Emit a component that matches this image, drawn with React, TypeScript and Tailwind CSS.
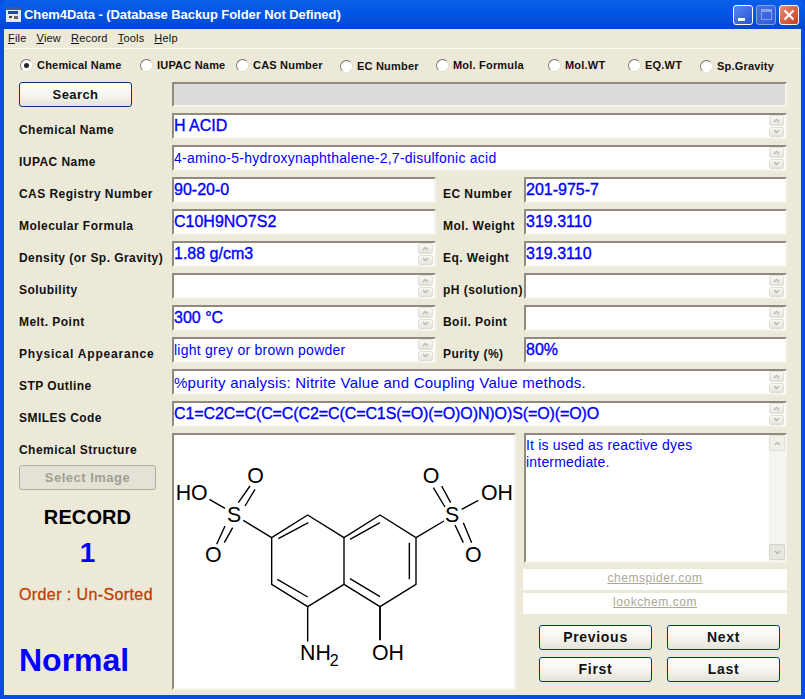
import React from 'react';

const ui = 'font-["Liberation_Sans",Arial,sans-serif]';

const Arrow = ({ down = false }: { down?: boolean }) => (
    <svg width="7" height="5" viewBox="0 0 7 5" className={down ? 'rotate-180' : ''}>
        <path d="M1 4 L3.5 1.5 L6 4" fill="none" stroke="#b8b8ac" strokeWidth="1.3" />
    </svg>
);

const SpinButton = ({ down = false }: { down?: boolean }) => (
    <div className="flex h-[11px] w-[15px] items-center justify-center rounded-[2px] border border-[#e0dfd6] bg-gradient-to-b from-[#f8f8f4] to-[#e6e5dc]">
        <Arrow down={down} />
    </div>
);

const Spinner = () => (
    <div className="flex w-[16px] shrink-0 flex-col justify-center gap-[1px] pr-[1px]">
        <SpinButton />
        <SpinButton down />
    </div>
);

const Field = ({ value = '', big = false, spin = false, text = '', className = '' }: { value?: string; big?: boolean; spin?: boolean; text?: string; className?: string }) => (
    <div className={`flex border-2 border-t-[#8f8b7d] border-l-[#8f8b7d] border-r-[#f4f3ec] border-b-[#f4f3ec] bg-white ${className}`}>
        <div className={`min-w-0 flex-1 truncate text-[#0000ff] ${big ? 'pt-[1px] text-[16px] leading-[19px] [-webkit-text-stroke:0.35px_#0000ff]' : 'pt-[3px] text-[14px] leading-[17px] tracking-[0.25px]'} ${text}`}>
            {value}
        </div>
        {spin && <Spinner />}
    </div>
);

const Label = ({ children, className = '' }: { children: React.ReactNode; className?: string }) => (
    <div className={`shrink-0 pt-[7px] text-[12px] leading-[20px] font-bold tracking-[0.45px] whitespace-nowrap text-[#111] ${className}`}>
        {children}
    </div>
);

const FullRow = ({ label, value, big, spin, text }: { label: string; value: string; big?: boolean; spin?: boolean; text?: string }) => (
    <div className="flex h-[26px]">
        <Label className="w-[153px]">{label}</Label>
        <Field value={value} big={big} spin={spin} text={text} className="flex-1" />
    </div>
);

const HalfRow = (props: { label: React.ReactNode; value?: string; big?: boolean; spin?: boolean; label2: string; value2?: string; big2?: boolean; spin2?: boolean }) => (
    <div className="flex h-[26px]">
        <Label className="w-[153px]">{props.label}</Label>
        <Field value={props.value} big={props.big} spin={props.spin} className="w-[264px]" />
        <Label className="ml-[7px] w-[81px]">{props.label2}</Label>
        <Field value={props.value2} big={props.big2} spin={props.spin2} className="flex-1" />
    </div>
);

const XpButton = ({ children, className = '' }: { children: React.ReactNode; className?: string }) => (
    <button
        type="button"
        className={`h-[25px] rounded-[3px] border border-[#003c74] bg-gradient-to-b from-white via-[#f6f5ef] to-[#e4e2d8] font-bold text-[#111] ${className}`}
    >
        {children}
    </button>
);

const radios = [
    { label: 'Chemical Name', w: 'w-[120px]', checked: true },
    { label: 'IUPAC Name', w: 'w-[96px]' },
    { label: 'CAS Number', w: 'w-[104px]' },
    { label: 'EC Number', w: 'w-[96px]', low: true },
    { label: 'Mol. Formula', w: 'w-[112px]' },
    { label: 'Mol.WT', w: 'w-[80px]' },
    { label: 'EQ.WT', w: 'w-[72px]' },
    { label: 'Sp.Gravity', w: 'w-[80px]', low: true },
];

const Molecule = () => (
    <svg viewBox="12 12 1017 750" width="339" height="250" className="block">
        <g fill="none" stroke="#000" strokeWidth="4.2">
            <path d="M305 320 L413 252 L522 320 L630 252 L738 320 L738 460 L630 527 L522 460 L413 527 L305 460 Z" />
            <path d="M522 320 L522 460" />
            <path d="M325 323 L415 275 M322 445 L413 498 M540 325 L630 275 M718 335 L718 445 M540 443 L630 497" />
            <path d="M305 320 L220 268 M118 205 L165 232 M205 215 L240 165 M225 225 L255 175 M140 340 L165 285 M163 335 L188 290" />
            <path d="M738 320 L822 270 M875 235 L925 208 M790 170 L825 228 M815 165 L842 215 M855 282 L880 335 M880 275 L905 335" />
            <path d="M413 527 L413 632" />
            <path d="M630 527 L630 628" strokeWidth="5.5" />
        </g>
        <g fontFamily="'Liberation Sans',Arial,sans-serif" fontSize="64" fill="#000">
            <text x="17" y="208">HO</text>
            <text x="232" y="156">O</text>
            <text x="171" y="274">S</text>
            <text x="105" y="392">O</text>
            <text x="758" y="156">O</text>
            <text x="825" y="274">S</text>
            <text x="885" y="392">O</text>
            <text x="933" y="208">OH</text>
            <text x="390" y="688">NH</text>
            <text x="479" y="705" fontSize="48">2</text>
            <text x="606" y="688">OH</text>
        </g>
    </svg>
);

const App = () => {
    return (
        <div className={`flex h-[699px] w-[805px] flex-col overflow-hidden bg-[#0a4ce0] ${ui}`}>
            {/* title bar */}
            <div className="flex h-[29px] shrink-0 items-center rounded-t-[7px] bg-gradient-to-b from-[#0a5ee8] via-[#0355e4] to-[#0046d0] pr-[6px] pl-[5px]">
                <svg width="17" height="17" viewBox="0 0 17 17" className="shrink-0">
                    <rect x="1" y="1" width="15" height="15" fill="#e8e8f0" />
                    <rect x="1" y="1" width="15" height="3" fill="#3a5a9a" />
                    <rect x="3" y="5" width="10" height="3" fill="#2244bb" />
                    <rect x="4" y="10" width="3" height="2" fill="#444" />
                    <rect x="9" y="10" width="4" height="3" fill="#667" />
                </svg>
                <div className="ml-[2px] flex-1 text-[13px] font-bold tracking-[-0.07px] whitespace-nowrap text-white">
                    Chem4Data - (Database Backup Folder Not Defined)
                </div>
                <div className="flex gap-[3px]">
                    <div className="flex h-[20px] w-[20px] items-end rounded-[3px] border border-white bg-gradient-to-br from-[#5b86ee] to-[#2452d8] pb-[3px] pl-[4px]">
                        <div className="h-[3px] w-[7px] bg-white" />
                    </div>
                    <div className="flex h-[20px] w-[20px] items-center justify-center rounded-[3px] border border-[#7fa0ee] bg-gradient-to-br from-[#4a72e4] to-[#2e58d8]">
                        <div className="h-[11px] w-[11px] border border-t-[3px] border-[#86a4ee]" />
                    </div>
                    <div className="flex h-[20px] w-[20px] items-center justify-center rounded-[3px] border border-white bg-gradient-to-br from-[#e88a70] to-[#c83c18]">
                        <svg width="12" height="12" viewBox="0 0 12 12">
                            <path d="M1.5 1.5 L10.5 10.5 M10.5 1.5 L1.5 10.5" stroke="#fff" strokeWidth="2.2" />
                        </svg>
                    </div>
                </div>
            </div>

            {/* window body */}
            <div className="mx-[4px] mb-[4px] flex min-h-0 flex-1 flex-col bg-[#ece9d8]">
                <div className="flex h-[20px] shrink-0 items-center gap-[10px] border-b border-[#fbfaf5] pl-[4px] text-[11px] tracking-[0.2px] text-[#111]">
                    <span><u>F</u>ile</span>
                    <span><u>V</u>iew</span>
                    <span><u>R</u>ecord</span>
                    <span><u>T</u>ools</span>
                    <span><u>H</u>elp</span>
                </div>

                <div className="pr-[14px] pl-[15px]">
                    {/* search-by options */}
                    <div className="mt-[6px] flex h-[20px] pl-[1px]">
                        {radios.map((r) => (
                            <div key={r.label} className={`flex shrink-0 items-center gap-[4px] ${r.w} ${r.low ? 'pt-[2px]' : ''}`}>
                                <div className="flex h-[13px] w-[13px] shrink-0 items-center justify-center rounded-full border border-[#e2e0d2] border-t-[#77756a] border-l-[#77756a] bg-white">
                                    {r.checked && <div className="h-[5px] w-[5px] rounded-full bg-[#222]" />}
                                </div>
                                <span className="text-[11px] font-bold tracking-[0.2px] whitespace-nowrap text-[#111]">{r.label}</span>
                            </div>
                        ))}
                    </div>

                    <div className="mt-[7px] flex h-[25px]">
                        <XpButton className="w-[113px] text-[13px] tracking-[0.4px]">Search</XpButton>
                        <div className="ml-[40px] flex-1 border-2 border-t-[#8f8b7d] border-l-[#8f8b7d] border-r-[#f4f3ec] border-b-[#f4f3ec] bg-[#dcdcdc]" />
                    </div>

                    <div className="mt-[6px] flex flex-col gap-[6px]">
                        <FullRow label="Chemical Name" value="H ACID" big spin />
                        <FullRow label="IUPAC Name" value="4-amino-5-hydroxynaphthalene-2,7-disulfonic acid" spin />
                        <HalfRow label="CAS Registry Number" value="90-20-0" big label2="EC Number" value2="201-975-7" big2 />
                        <HalfRow label="Molecular Formula" value="C10H9NO7S2" big label2="Mol. Weight" value2="319.3110" big2 />
                        <HalfRow label="Density (or Sp. Gravity)" value="1.88 g/cm3" big spin label2="Eq. Weight" value2="319.3110" big2 />
                        <HalfRow label="Solubility" spin label2="pH (solution)" spin2 />
                        <HalfRow label="Melt. Point" value="300 °C" big spin label2="Boil. Point" spin2 />
                        <HalfRow label={<span className="tracking-[0.8px]">Physical Appearance</span>} value="light grey or brown powder" spin label2="Purity (%)" value2="80%" big2 />
                        <FullRow label="STP Outline" value="%purity analysis: Nitrite Value and Coupling Value methods." spin text="!text-[15px] !tracking-[0.25px]" />
                        <FullRow label="SMILES Code" value="C1=C2C=C(C=C(C2=C(C=C1S(=O)(=O)O)N)O)S(=O)(=O)O" big spin text="tracking-[-0.1px]" />
                    </div>

                    {/* bottom part */}
                    <div className="mt-[6px] flex h-[257px]">
                        <div className="flex w-[153px] shrink-0 flex-col">
                            <Label>Chemical Structure</Label>
                            <button
                                type="button"
                                className="mt-[5px] h-[25px] w-[137px] rounded-[3px] border border-[#b0ae9e] bg-[#e4e2d6] text-[13px] font-bold tracking-[0.5px] text-[#a0a08e]"
                            >
                                Select Image
                            </button>
                            <div className="mt-[15px] w-[137px] text-center text-[20px] leading-[24px] font-bold tracking-[0.1px] text-black">RECORD</div>
                            <div className="mt-[8px] w-[137px] text-center text-[28px] leading-[32px] font-bold text-[#0000ff]">1</div>
                            <div className="mt-[16px] text-[16px] leading-[20px] tracking-[0.4px] text-[#c04000] [-webkit-text-stroke:0.3px_#c04000]">Order : Un-Sorted</div>
                            <div className="mt-[35px] text-[32px] leading-[40px] font-bold text-[#0000ff]">Normal</div>
                        </div>
                        <div className="h-[257px] w-[344px] shrink-0 border-2 border-t-[#8f8b7d] border-l-[#8f8b7d] border-r-[#f4f3ec] border-b-[#f4f3ec] bg-white">
                            <Molecule />
                        </div>
                        <div className="ml-[8px] flex min-w-0 flex-1 flex-col">
                            <div className="flex h-[130px] border-2 border-t-[#8f8b7d] border-l-[#8f8b7d] border-r-[#f4f3ec] border-b-[#f4f3ec] bg-white">
                                <div className="flex-1 pt-[2px] text-[14px] leading-[17px] tracking-[0.2px] text-[#0000ff]">
                                    It is used as reactive dyes intermediate.
                                </div>
                                <div className="flex w-[16px] flex-col justify-between bg-[#f4f4f0] pb-[1px]">
                                    <div className="flex h-[16px] w-[16px] items-center justify-center rounded-[2px] border border-[#e0dfd6] bg-[#f0efe8]"><Arrow /></div>
                                    <div className="flex h-[16px] w-[16px] items-center justify-center rounded-[2px] border border-[#d6d5ca] bg-[#e8e7de]"><Arrow down /></div>
                                </div>
                            </div>
                            <div className="mt-[6px] -ml-[1px] flex h-[21px] items-center justify-center bg-white pb-[3px] text-[12px] tracking-[0.55px] text-[#aca899] underline">chemspider.com</div>
                            <div className="mt-[3px] -ml-[1px] flex h-[21px] items-center justify-center bg-white pb-[3px] text-[12px] tracking-[0.55px] text-[#aca899] underline">lookchem.com</div>
                            <div className="mt-[11px] grid grid-cols-[113px_113px] gap-x-[15px] gap-y-[7px] pl-[15px]">
                                <XpButton className="text-[14px] tracking-[0.7px]">Previous</XpButton>
                                <XpButton className="text-[14px] tracking-[0.7px]">Next</XpButton>
                                <XpButton className="text-[14px] tracking-[0.7px]">First</XpButton>
                                <XpButton className="text-[14px] tracking-[0.7px]">Last</XpButton>
                            </div>
                        </div>
                    </div>
                </div>
            </div>
        </div>
    );
};

export default App;
